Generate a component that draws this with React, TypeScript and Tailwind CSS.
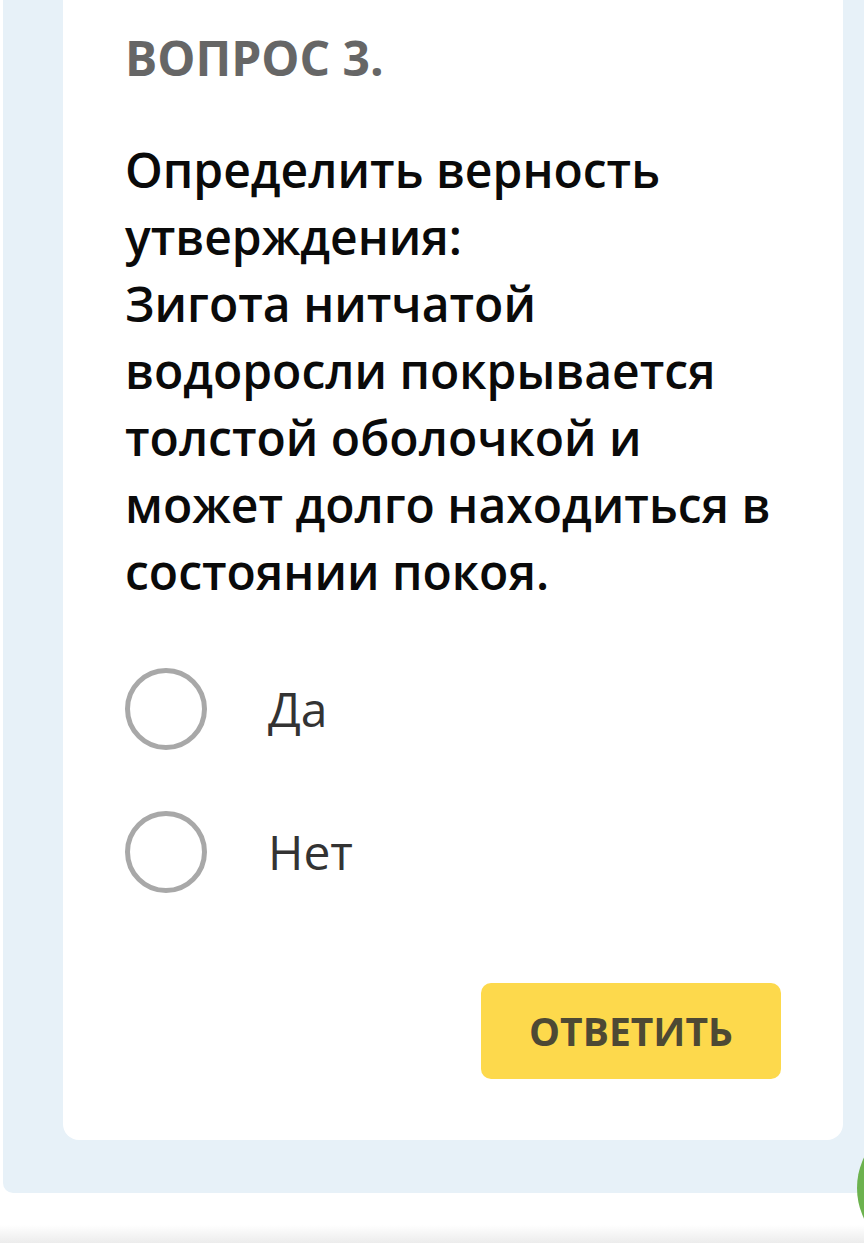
import React, { useState } from "react";

const options = ["Да", "Нет"];

const App: React.FC = () => {
  const [selected, setSelected] = useState<number | null>(null);

  return (
    <div
      className="relative h-[1243px] w-[864px] overflow-hidden bg-white"
      style={{ fontFamily: '"Open Sans", "Noto Sans", sans-serif' }}
    >
      {/* outer light-blue panel */}
      <div className="ml-[3px] mr-[-40px] rounded-bl-[10px] bg-[#e7f1f8] pb-[53px] pl-[60px]">
        <div className="w-[780px] rounded-b-[16px] bg-white px-[62px] pt-[32px] pb-[61px]">
          <h2 className="text-[48px] font-bold leading-[52px] text-[#666666]">
            ВОПРОС 3.
          </h2>

          <p className="mt-[52px] text-[48px] font-semibold leading-[67px] text-[#0a0a0a]">
            Определить верность утверждения:
            <br />
            Зигота нитчатой водоросли покрывается толстой оболочкой и может
            долго находиться в состоянии покоя.
          </p>

          <div className="mt-[64px] flex flex-col gap-[63px]">
            {options.map((opt, i) => (
              <label
                key={opt}
                className="flex h-[80px] cursor-pointer items-center gap-[61px]"
                onClick={() => setSelected(i)}
              >
                <span className="flex h-[82px] w-[82px] shrink-0 items-center justify-center rounded-full border-[5px] border-[#a8a8a8]">
                  {selected === i && (
                    <span className="h-[40px] w-[40px] rounded-full bg-[#a8a8a8]" />
                  )}
                </span>
                <span className="text-[48px] leading-none text-[#333333]">
                  {opt}
                </span>
              </label>
            ))}
          </div>

          <div className="mt-[91px] flex justify-end">
            <button className="h-[96px] w-[300px] rounded-[10px] bg-[#fdd94c] text-[39px] font-bold text-[#4d4934]">
              ОТВЕТИТЬ
            </button>
          </div>
        </div>
      </div>

      {/* green floating button, mostly off-screen */}
      <div className="absolute left-[857px] top-[1118px] h-[140px] w-[140px] rounded-full bg-[#6cb24e]" />

      {/* bottom shade */}
      <div className="absolute bottom-0 left-0 h-[18px] w-full bg-gradient-to-b from-white to-[#ececec]" />
    </div>
  );
};

export default App;
